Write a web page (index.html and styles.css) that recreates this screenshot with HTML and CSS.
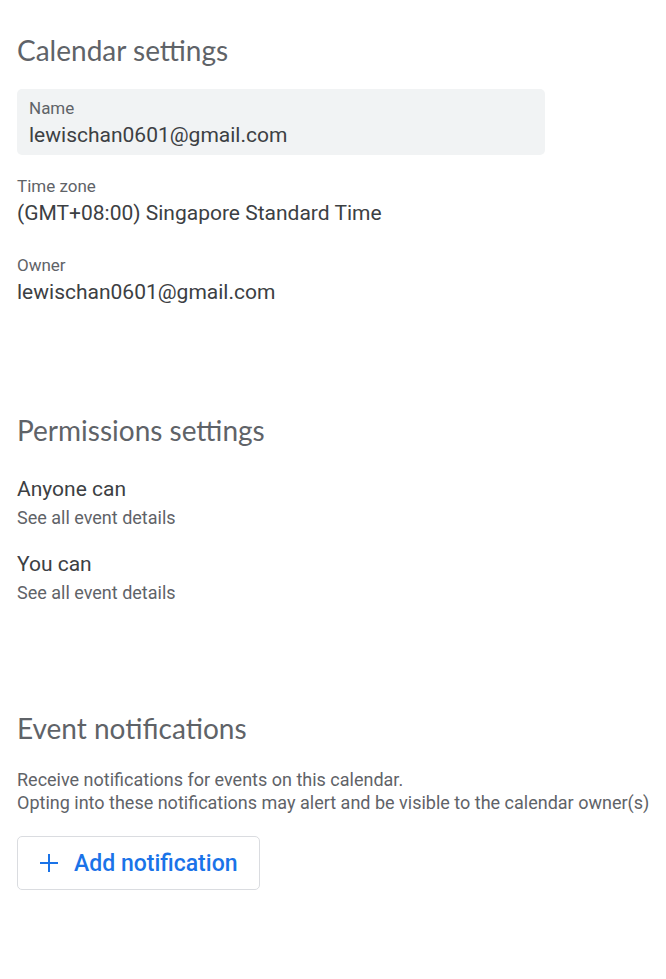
FILE: index.html
```html
<!DOCTYPE html>
<html>
<head>
<meta charset="utf-8">
<link rel="stylesheet" href="styles.css">
</head>
<body>
<main class="page">
  <section class="section">
    <h2 class="heading">Calendar settings</h2>
    <div class="name-box">
      <div class="label">Name</div>
      <div class="value">lewischan0601@gmail.com</div>
    </div>
    <div class="field">
      <div class="label">Time zone</div>
      <div class="value">(GMT+08:00) Singapore Standard Time</div>
    </div>
    <div class="field">
      <div class="label">Owner</div>
      <div class="value">lewischan0601@gmail.com</div>
    </div>
  </section>
  <section class="section perms">
    <h2 class="heading">Permissions settings</h2>
    <div class="perm">
      <div class="perm-title">Anyone can</div>
      <div class="perm-sub">See all event details</div>
    </div>
    <div class="perm">
      <div class="perm-title">You can</div>
      <div class="perm-sub">See all event details</div>
    </div>
  </section>
  <section class="section notif">
    <h2 class="heading">Event notifications</h2>
    <p class="desc">Receive notifications for events on this calendar.<br>Opting into these notifications may alert and be visible to the calendar owner(s)</p>
    <button class="add-btn">
      <svg class="plus" width="18" height="18" viewBox="0 0 18 18"><path d="M9 0v18M0 9h18" stroke="#1a73e8" stroke-width="2" fill="none"/></svg>
      <span>Add notification</span>
    </button>
  </section>
</main>
</body>
</html>
```
FILE: styles.css
```css
* { box-sizing: border-box; }
body {
  margin: 0;
  background: #fff;
  font-family: Roboto, "Noto Sans", sans-serif;
  color: #3c4043;
}
.page {
  padding: 34px 0 0 17px;
}
.section { display: flex; flex-direction: column; align-items: flex-start; }
.heading {
  margin: 0;
  font-family: Lato, "Open Sans", sans-serif;
  font-weight: 400;
  font-size: 28px;
  line-height: 32px;
  color: #5f6368;
}
.name-box {
  margin-top: 23px;
  width: 528px;
  height: 66px;
  background: #f1f3f4;
  border-radius: 5px;
  padding: 9px 12px 0;
}
.label {
  font-size: 17px;
  line-height: 20px;
  color: #5f6368;
}
.value {
  margin-top: 3px;
  font-size: 21px;
  line-height: 28px;
  color: #3c4043;
}
.field { margin-top: 21px; }
.field + .field { margin-top: 28px; }
.perms { margin-top: 108px; }
.perm { margin-top: 29px; }
.perm + .perm { margin-top: 21px; }
.perm-title { font-size: 21px; line-height: 28px; color: #3c4043; }
.perm-sub { margin-top: 4px; font-size: 18px; line-height: 22px; color: #5f6368; }
.notif { margin-top: 108px; }
.desc {
  margin: 24px 0 0;
  font-size: 18px;
  line-height: 23px;
  color: #5f6368;
}
.add-btn {
  margin-top: 22px;
  width: 243px;
  height: 54px;
  border: 1px solid #dadce0;
  border-radius: 5px;
  background: #fff;
  display: flex;
  align-items: center;
  gap: 16px;
  padding: 0 0 0 22px;
  font-family: Roboto, sans-serif;
  font-weight: 500;
  font-size: 23px;
  color: #1a73e8;
}
.plus { flex: none; }
```
